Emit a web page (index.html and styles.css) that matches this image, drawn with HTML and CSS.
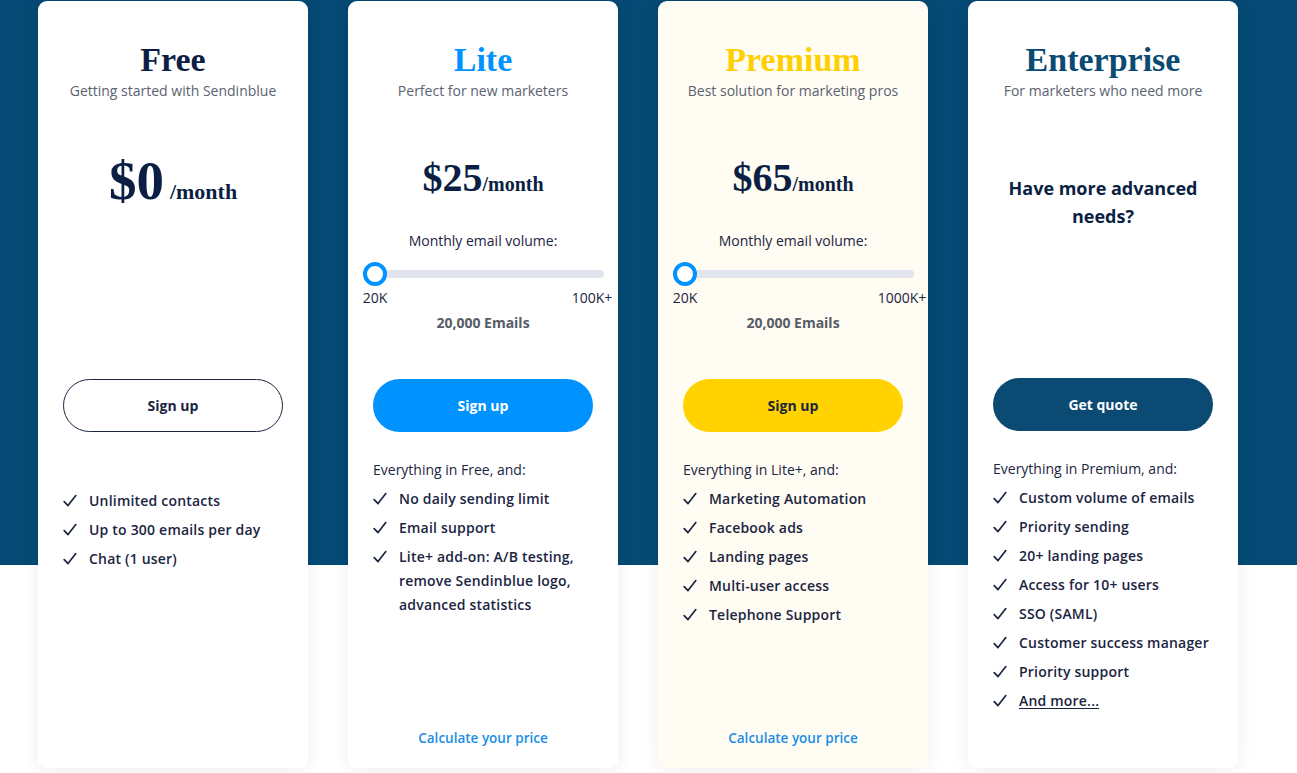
FILE: index.html
```html
<!DOCTYPE html>
<html lang="en">
<head>
<meta charset="utf-8">
<title>Pricing</title>
<link rel="stylesheet" href="styles.css">
</head>
<body>
<main class="page">
  <div class="cards">
    <section class="card">
      <header class="card-head">
        <h2 class="plan-title">Free</h2>
        <p class="plan-sub">Getting started with Sendinblue</p>
      </header>
      <div class="pricing">
        <div class="price price-free"><span class="amount">$0</span><span class="per">/month</span></div>
      </div>
      <a class="btn btn-outline" href="#">Sign up</a>
      <div class="features features-free">
        <ul class="feature-list">
          <li><svg class="check" viewBox="0 0 14 14"><path d="M1.2 7.6 L5 11.6 L12.8 1.6"/></svg><span>Unlimited contacts</span></li>
          <li><svg class="check" viewBox="0 0 14 14"><path d="M1.2 7.6 L5 11.6 L12.8 1.6"/></svg><span>Up to 300 emails per day</span></li>
          <li><svg class="check" viewBox="0 0 14 14"><path d="M1.2 7.6 L5 11.6 L12.8 1.6"/></svg><span>Chat (1 user)</span></li>
        </ul>
      </div>
    </section>

    <section class="card">
      <header class="card-head">
        <h2 class="plan-title title-lite">Lite</h2>
        <p class="plan-sub">Perfect for new marketers</p>
      </header>
      <div class="pricing">
        <div class="price"><span class="amount">$25</span><span class="per">/month</span></div>
        <p class="vol-label">Monthly email volume:</p>
        <div class="slider">
          <div class="track"><span class="thumb"></span></div>
          <div class="range"><span>20K</span><span>100K+</span></div>
        </div>
        <p class="vol-value">20,000 Emails</p>
      </div>
      <a class="btn btn-blue" href="#">Sign up</a>
      <div class="features">
        <p class="intro">Everything in Free, and:</p>
        <ul class="feature-list">
          <li><svg class="check" viewBox="0 0 14 14"><path d="M1.2 7.6 L5 11.6 L12.8 1.6"/></svg><span>No daily sending limit</span></li>
          <li><svg class="check" viewBox="0 0 14 14"><path d="M1.2 7.6 L5 11.6 L12.8 1.6"/></svg><span>Email support</span></li>
          <li><svg class="check" viewBox="0 0 14 14"><path d="M1.2 7.6 L5 11.6 L12.8 1.6"/></svg><span>Lite+ add-on: A/B testing, remove Sendinblue logo, advanced statistics</span></li>
        </ul>
      </div>
      <a class="calc" href="#">Calculate your price</a>
    </section>

    <section class="card card-premium">
      <header class="card-head">
        <h2 class="plan-title title-premium">Premium</h2>
        <p class="plan-sub">Best solution for marketing pros</p>
      </header>
      <div class="pricing">
        <div class="price"><span class="amount">$65</span><span class="per">/month</span></div>
        <p class="vol-label">Monthly email volume:</p>
        <div class="slider">
          <div class="track"><span class="thumb"></span></div>
          <div class="range"><span>20K</span><span>1000K+</span></div>
        </div>
        <p class="vol-value">20,000 Emails</p>
      </div>
      <a class="btn btn-yellow" href="#">Sign up</a>
      <div class="features">
        <p class="intro">Everything in Lite+, and:</p>
        <ul class="feature-list">
          <li><svg class="check" viewBox="0 0 14 14"><path d="M1.2 7.6 L5 11.6 L12.8 1.6"/></svg><span>Marketing Automation</span></li>
          <li><svg class="check" viewBox="0 0 14 14"><path d="M1.2 7.6 L5 11.6 L12.8 1.6"/></svg><span>Facebook ads</span></li>
          <li><svg class="check" viewBox="0 0 14 14"><path d="M1.2 7.6 L5 11.6 L12.8 1.6"/></svg><span>Landing pages</span></li>
          <li><svg class="check" viewBox="0 0 14 14"><path d="M1.2 7.6 L5 11.6 L12.8 1.6"/></svg><span>Multi-user access</span></li>
          <li><svg class="check" viewBox="0 0 14 14"><path d="M1.2 7.6 L5 11.6 L12.8 1.6"/></svg><span>Telephone Support</span></li>
        </ul>
      </div>
      <a class="calc" href="#">Calculate your price</a>
    </section>

    <section class="card">
      <header class="card-head">
        <h2 class="plan-title title-ent">Enterprise</h2>
        <p class="plan-sub">For marketers who need more</p>
      </header>
      <div class="pricing">
        <p class="advanced">Have more advanced needs?</p>
      </div>
      <a class="btn btn-dark" href="#">Get quote</a>
      <div class="features">
        <p class="intro">Everything in Premium, and:</p>
        <ul class="feature-list">
          <li><svg class="check" viewBox="0 0 14 14"><path d="M1.2 7.6 L5 11.6 L12.8 1.6"/></svg><span>Custom volume of emails</span></li>
          <li><svg class="check" viewBox="0 0 14 14"><path d="M1.2 7.6 L5 11.6 L12.8 1.6"/></svg><span>Priority sending</span></li>
          <li><svg class="check" viewBox="0 0 14 14"><path d="M1.2 7.6 L5 11.6 L12.8 1.6"/></svg><span>20+ landing pages</span></li>
          <li><svg class="check" viewBox="0 0 14 14"><path d="M1.2 7.6 L5 11.6 L12.8 1.6"/></svg><span>Access for 10+ users</span></li>
          <li><svg class="check" viewBox="0 0 14 14"><path d="M1.2 7.6 L5 11.6 L12.8 1.6"/></svg><span>SSO (SAML)</span></li>
          <li><svg class="check" viewBox="0 0 14 14"><path d="M1.2 7.6 L5 11.6 L12.8 1.6"/></svg><span>Customer success manager</span></li>
          <li><svg class="check" viewBox="0 0 14 14"><path d="M1.2 7.6 L5 11.6 L12.8 1.6"/></svg><span>Priority support</span></li>
          <li><svg class="check" viewBox="0 0 14 14"><path d="M1.2 7.6 L5 11.6 L12.8 1.6"/></svg><a class="more" href="#">And more...</a></li>
        </ul>
      </div>
    </section>
  </div>
</main>
</body>
</html>
```

FILE: styles.css
```css
* { box-sizing: border-box; }

html, body {
  margin: 0;
  padding: 0;
}

body {
  font-family: "Open Sans", "Liberation Sans", sans-serif;
  color: #1b2541;
  background: #ffffff;
  width: 1297px;
  height: 773px;
  overflow: hidden;
}

.page {
  height: 773px;
  background: linear-gradient(to bottom, #044a74 0, #044a74 565px, #ffffff 565px, #ffffff 100%);
  padding: 1px 0 0 38px;
}

.cards {
  display: flex;
  gap: 40px;
}

.card {
  width: 270px;
  height: 767px;
  background: #ffffff;
  border-radius: 9px;
  box-shadow: 0 2px 18px rgba(0, 0, 0, 0.07);
  display: flex;
  flex-direction: column;
  padding: 39px 25px 20px;
}

.card-premium {
  background: #fffcf3;
}

.card-head {
  text-align: center;
}

.plan-title {
  margin: 0;
  font-family: "Liberation Serif", "Times New Roman", serif;
  font-weight: 700;
  font-size: 34px;
  line-height: 40px;
  color: #0b1f44;
}

.title-lite { color: #0092ff; }
.title-premium { color: #ffd000; }
.title-ent { color: #0b4a72; }

.plan-sub {
  margin: 1px 0 0;
  font-size: 14px;
  line-height: 20px;
  color: #5b6271;
  white-space: nowrap;
}

.pricing {
  height: 278px;
  flex-shrink: 0;
  display: flex;
  flex-direction: column;
  align-items: stretch;
  text-align: center;
}

.price {
  margin-top: 52px;
  display: flex;
  justify-content: center;
  align-items: baseline;
  font-family: "Liberation Serif", "Times New Roman", serif;
  font-weight: 700;
  color: #0b1f44;
  line-height: 50px;
  height: 50px;
}

.price .amount {
  font-size: 40px;
}

.price .per {
  font-size: 20px;
}

.price-free {
  margin-top: 55px;
}

.price-free .amount {
  font-size: 55px;
}

.price-free .per {
  font-size: 22px;
  margin-left: 6px;
}

.vol-label {
  margin: 28px 0 0;
  font-size: 14px;
  line-height: 20px;
  color: #1b2541;
}

.slider {
  margin: 11px -19px 0 -10px;
}

.track {
  position: relative;
  height: 24px;
  margin-right: 8px;
}

.track::before {
  content: "";
  position: absolute;
  left: 0;
  right: 0;
  top: 8px;
  height: 8px;
  border-radius: 4px;
  background: #e1e4ec;
}

.thumb {
  position: absolute;
  left: 0;
  top: 0;
  width: 24px;
  height: 24px;
  border-radius: 50%;
  background: #ffffff;
  border: 4px solid #0092ff;
}

.range {
  margin: 3px -5px 0 -13px;
  display: flex;
  justify-content: space-between;
  font-size: 14px;
  line-height: 18px;
  color: #1b2541;
}

.range span {
  width: 50px;
  text-align: center;
  white-space: nowrap;
  display: flex;
  justify-content: center;
}

.vol-value {
  margin: 6px 0 0;
  font-size: 14px;
  line-height: 20px;
  font-weight: 700;
  color: #575c66;
}

.advanced {
  margin: 73px 0 0;
  font-size: 18px;
  line-height: 28px;
  font-weight: 700;
  color: #0b1f44;
}

.btn {
  display: flex;
  align-items: center;
  justify-content: center;
  height: 53px;
  border-radius: 27px;
  font-size: 14px;
  font-weight: 700;
  text-decoration: none;
  flex-shrink: 0;
}

.btn-outline {
  border: 1px solid #1b2541;
  color: #1b2541;
  background: #ffffff;
}

.btn-blue {
  background: #0092ff;
  color: #ffffff;
}

.btn-yellow {
  background: #ffd200;
  color: #1b2541;
}

.btn-dark {
  background: #0b4a72;
  color: #ffffff;
  margin-top: -1px;
}

.features {
  margin-top: 26px;
}

.features-free {
  margin-top: 57px;
}

.intro {
  margin: 0 0 5px;
  font-size: 14px;
  line-height: 24px;
  color: #1b2541;
}

.feature-list {
  list-style: none;
  margin: 0;
  padding: 0;
}

.feature-list li {
  display: flex;
  align-items: flex-start;
  gap: 12px;
  font-size: 14px;
  line-height: 24px;
  font-weight: 600;
  letter-spacing: 0.2px;
  color: #1b2541;
  margin-bottom: 5px;
}

.check {
  width: 14px;
  height: 14px;
  flex-shrink: 0;
  margin-top: 5px;
  fill: none;
  stroke: #1b2541;
  stroke-width: 1.7;
  stroke-linecap: round;
  stroke-linejoin: round;
}

.more {
  color: #1b2541;
  text-decoration: underline;
  text-underline-offset: 2px;
}

.calc {
  margin-top: auto;
  text-align: center;
  font-size: 13.5px;
  line-height: 20px;
  font-weight: 600;
  color: #1a8ee6;
  text-decoration: none;
}
```
